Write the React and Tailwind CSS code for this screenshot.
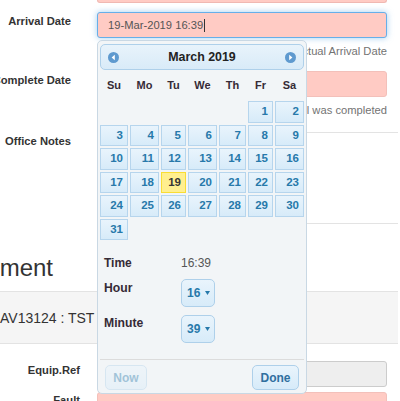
const COLS = "grid grid-cols-[28px_29px_25px_29px_27px_25px_29px] gap-x-[2px]";

function Circle({ dir }) {
  return (
    <svg width="11" height="11" viewBox="0 0 11 11">
      <circle cx="5.5" cy="5.5" r="5.5" fill="#5f9acf" />
      {dir === "w" ? (
        <polygon points="6.8,2.8 3.6,5.5 6.8,8.2" fill="#ffffff" />
      ) : (
        <polygon points="4.2,2.8 7.4,5.5 4.2,8.2" fill="#ffffff" />
      )}
    </svg>
  );
}

function Select({ value }) {
  return (
    <div className="w-[34px] h-[28px] rounded-[5px] border border-[#aed0ea] bg-gradient-to-b from-[#e9f4fc] to-[#d7ebf9] flex items-center pl-[5px] text-[12px] font-bold text-[#2779aa]">
      <span>{value}</span>
      <svg width="5" height="4" viewBox="0 0 5 4" className="ml-[5px]">
        <polygon points="0,0 5,0 2.5,4" fill="#2779aa" />
      </svg>
    </div>
  );
}

function DatePicker() {
  const names = ["Su", "Mo", "Tu", "We", "Th", "Fr", "Sa"];
  const cells = [];
  for (let i = 0; i < 5; i++) cells.push(null);
  for (let d = 1; d <= 31; d++) cells.push(d);
  return (
    <div className="absolute left-[97px] top-[40px] w-[210px] rounded-[5px] border border-[#c9d8e4] bg-[#f2f5f7] px-[2px] pt-[3px] pb-[3px]">
      <div className="h-[26px] rounded-[5px] border border-[#aed0ea] bg-gradient-to-b from-[#e8f3fb] to-[#d9ebf8] flex items-center justify-between px-[7px]">
        <Circle dir="w" />
        <span className="text-[12.4px] font-bold text-[#222]">March 2019</span>
        <Circle dir="e" />
      </div>
      <div className={COLS + " mt-[1px] h-[28px] items-center text-center text-[11px] font-bold text-[#362b36]"}>
        {names.map((n) => (
          <span key={n}>{n}</span>
        ))}
      </div>
      <div className={COLS + " mt-[2px] gap-y-[2px] auto-rows-[21.5px]"}>
        {cells.map((d, i) =>
          d === null ? (
            <span key={i} />
          ) : d === 19 ? (
            <span
              key={i}
              className="flex items-center justify-end pr-[4px] border border-[#f9dd34] bg-[#ffef8f] text-[11.5px] font-bold text-[#363636]"
            >
              {d}
            </span>
          ) : (
            <span
              key={i}
              className="flex items-center justify-end pr-[4px] border border-[#b6d5ed] bg-gradient-to-b from-[#e9f4fc] to-[#d7ebf9] text-[11.5px] font-bold text-[#2779aa]"
            >
              {d}
            </span>
          )
        )}
      </div>
      <div className="mt-[15px] px-[4px] flex flex-col gap-[8px]">
        <div className="flex h-[16px] items-center text-[12px]">
          <span className="w-[77px] font-bold text-[#362b36]">Time</span>
          <span className="text-[#555]">16:39</span>
        </div>
        <div className="flex items-start">
          <span className="w-[77px] pt-[1px] leading-[16px] text-[12.2px] font-bold text-[#362b36]">Hour</span>
          <Select value="16" />
        </div>
        <div className="flex items-start">
          <span className="w-[77px] leading-[16px] text-[12.2px] font-bold text-[#362b36]">Minute</span>
          <Select value="39" />
        </div>
      </div>
      <div className="mt-[16px] h-px bg-[#dcdcdc]" />
      <div className="mt-[5px] flex justify-between pl-[5px] pr-[5px]">
        <div className="w-[42px] h-[25px] rounded-[5px] border border-[#aed0ea] bg-gradient-to-b from-[#e9f4fc] to-[#d7ebf9] flex items-center justify-center text-[12px] font-bold text-[#2779aa] opacity-40">
          Now
        </div>
        <div className="w-[47px] h-[25px] rounded-[5px] border border-[#aed0ea] bg-gradient-to-b from-[#e9f4fc] to-[#d7ebf9] flex items-center justify-center text-[12px] font-bold text-[#2f6f9f]">
          Done
        </div>
      </div>
    </div>
  );
}

export default function App() {
  return (
    <div className="relative w-[400px] h-[401px] overflow-hidden bg-white text-[#333] font-['Liberation_Sans',Arial,sans-serif]">
      <div className="ml-[97px] w-[290px] h-[3px] bg-[#ffcbc4] border border-t-0 border-[#f0b8b2] rounded-b-[3px]" />

      <div className="mt-[9px] flex">
        <div className="w-[71px] shrink-0 flex justify-end pt-[1px] text-[11.2px] leading-[17px] font-bold whitespace-nowrap">
          Arrival Date
        </div>
        <div className="ml-[26px] w-[290px]">
          <div className="h-[26px] rounded-[3px] border border-[#66afe9] bg-[#ffcbc4] shadow-[0_0_6px_rgba(102,175,233,0.6)] px-[10px] flex items-center text-[11.2px] text-[#555]">
            19-Mar-2019 16:39
            <span className="inline-block w-px h-[13px] bg-[#333] ml-[1px]" />
          </div>
          <div className="mt-[5px] h-[16px] leading-[16px] text-[11.2px] text-[#737373] text-right whitespace-nowrap">
            Enter the actual Arrival Date
          </div>
        </div>
      </div>

      <div className="mt-[12px] flex">
        <div className="w-[71px] shrink-0 flex justify-end pt-[1px] text-[11.2px] leading-[17px] font-bold whitespace-nowrap">
          Complete Date
        </div>
        <div className="ml-[26px] w-[290px]">
          <div className="h-[26px] rounded-[3px] border border-[#f3c0ba] bg-[#ffcbc4]" />
          <div className="mt-[5px] h-[16px] leading-[16px] text-[11.2px] text-[#737373] text-right whitespace-nowrap">
            Date the job control was completed
          </div>
        </div>
      </div>

      <div className="mt-[14px] flex">
        <div className="w-[71px] shrink-0 flex justify-end pt-[1px] text-[11.2px] leading-[17px] font-bold whitespace-nowrap">
          Office Notes
        </div>
        <div className="ml-[26px] w-[301px] h-[92px] border-y border-[#e3e3e3]" />
      </div>

      <div className="mt-[31px] w-[53px] flex justify-end text-[24px] leading-[26px] text-[#333] whitespace-nowrap">
        Equipment
      </div>

      <div className="mt-[10px] w-[398px] h-[53px] border-y border-[#e3e3e3] bg-[#f5f5f5] flex items-center text-[14px] leading-[20px] whitespace-nowrap">
        AV13124 : TST
      </div>

      <div className="mt-[17px] flex">
        <div className="w-[80px] shrink-0 flex justify-end pt-[1px] text-[11.2px] leading-[17px] font-bold whitespace-nowrap">
          Equip.Ref
        </div>
        <div className="ml-[17px] w-[290px] h-[26px] rounded-[3px] border border-[#cccccc] bg-[#eeeeee]" />
      </div>

      <div className="mt-[5px] flex">
        <div className="w-[80px] shrink-0 flex justify-end text-[11.2px] leading-[17px] font-bold whitespace-nowrap">
          Fault
        </div>
        <div className="ml-[17px] w-[290px] h-[26px] rounded-[3px] border border-[#f3c0ba] bg-[#ffcbc4]" />
      </div>

      <DatePicker />
    </div>
  );
}
